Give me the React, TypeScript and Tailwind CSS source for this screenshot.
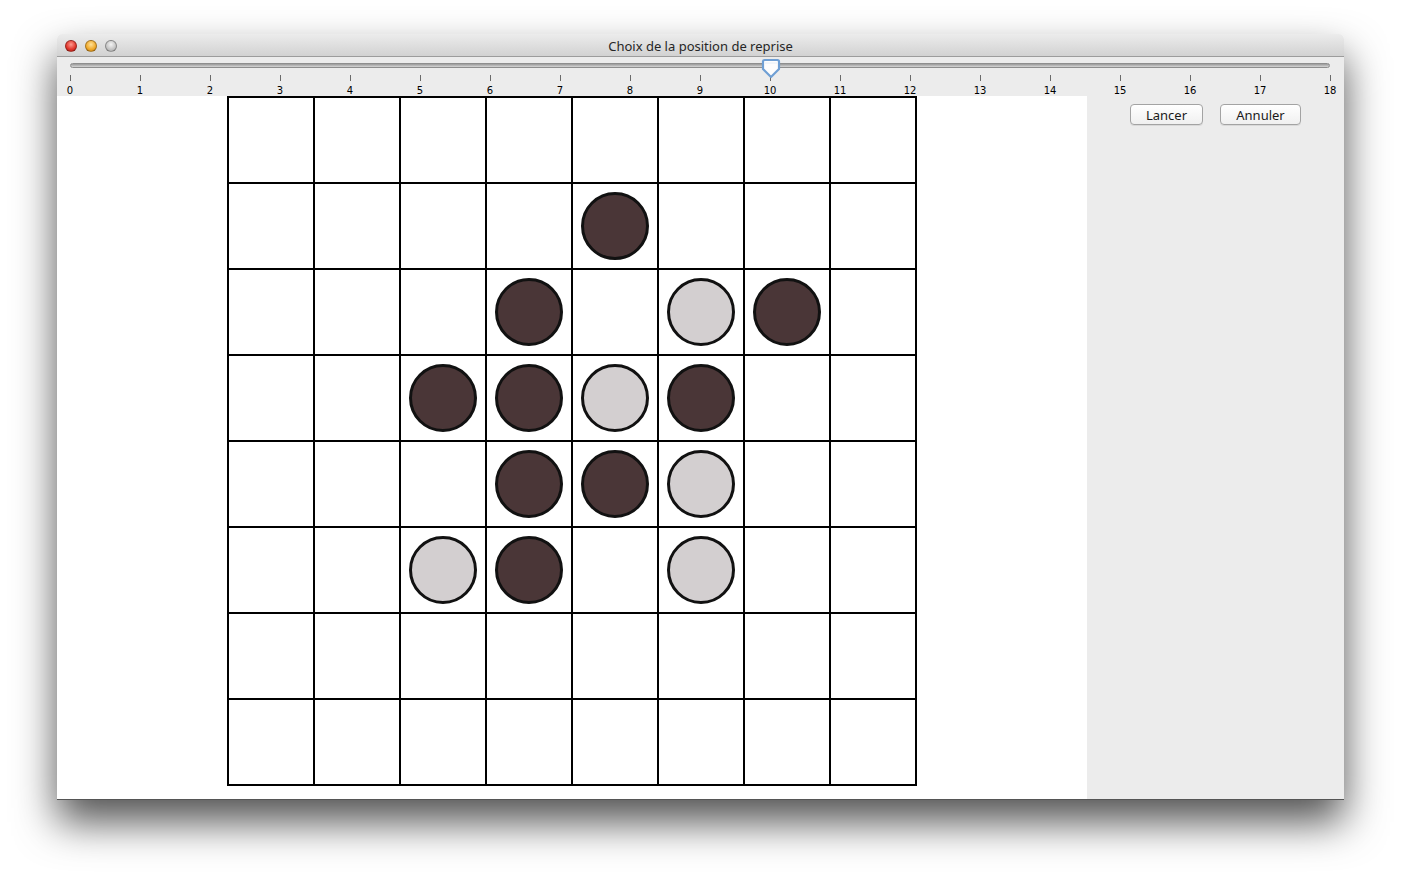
import React from 'react';

// 0 = empty, 1 = dark, 2 = light
const board: number[][] = [
  [0, 0, 0, 0, 0, 0, 0, 0],
  [0, 0, 0, 0, 1, 0, 0, 0],
  [0, 0, 0, 1, 0, 2, 1, 0],
  [0, 0, 1, 1, 2, 1, 0, 0],
  [0, 0, 0, 1, 1, 2, 0, 0],
  [0, 0, 2, 1, 0, 2, 0, 0],
  [0, 0, 0, 0, 0, 0, 0, 0],
  [0, 0, 0, 0, 0, 0, 0, 0],
];

const ticks = Array.from({ length: 19 }, (_, i) => i);

const Light: React.FC<{ color: string }> = ({ color }) => (
  <div className={`w-[12px] h-[12px] rounded-full border border-black/30 ${color}`} />
);

const App: React.FC = () => {
  return (
    <div className="w-[1401px] h-[879px] bg-white pl-[57px] pt-[34px] font-['Noto_Sans',sans-serif]">
      <div className="w-[1287px] h-[766px] flex flex-col rounded-t-[5px] border-b border-[#555] shadow-[0_22px_42px_rgba(0,0,0,0.68)] overflow-hidden">
        {/* title bar */}
        <div className="relative h-[23px] flex items-center justify-center bg-gradient-to-b from-[#ececec] to-[#d2d2d2] border-b border-[#9c9c9c]">
          <div className="absolute left-[8px] top-[6px] flex gap-[8px]">
            <Light color="bg-[radial-gradient(circle_at_50%_35%,#ff9a8f,#e0352b_60%,#b01e16)]" />
            <Light color="bg-[radial-gradient(circle_at_50%_35%,#ffe29a,#f0a92a_60%,#c07a10)]" />
            <Light color="bg-[radial-gradient(circle_at_50%_35%,#f4f4f4,#c4c4c4_60%,#a6a6a6)]" />
          </div>
          <span className="mt-[2px] text-[13px] leading-[16px] text-[#262626]">Choix de la position de reprise</span>
        </div>

        {/* slider */}
        <div className="relative h-[39px] bg-[#ececec] pl-[13px] pr-[14px]">
          <div className="mt-[6px] h-[5px] rounded-full border border-[#8e8e8e] bg-gradient-to-b from-[#9a9a9a] to-[#d6d6d6]" />
          <div className="mt-[7px] flex justify-between">
            {ticks.map((t) => (
              <div key={t} className="w-0 flex flex-col items-center">
                <div className="w-px h-[6px] bg-[#6a6a6a] shrink-0" />
                <span className="mt-[4px] text-[10px] leading-[12px] text-black font-['DejaVu_Sans',sans-serif] whitespace-nowrap">{t}</span>
              </div>
            ))}
          </div>
          <svg className="absolute left-[703px] top-[1px]" width="22" height="22" viewBox="0 0 22 22">
            <path d="M3 3.5 Q3 2 4.5 2 H17.5 Q19 2 19 3.5 V11 L11 19 L3 11 Z" fill="#fdfdfd" stroke="#6f9fd4" strokeWidth="2.2" strokeLinejoin="round" />
            <path d="M5 5 H17" stroke="#e6eef8" strokeWidth="1" />
          </svg>
        </div>

        {/* body */}
        <div className="flex flex-1">
          <div className="w-[1030px] bg-white pl-[170px]">
            <div className="w-[690px] grid grid-cols-8 gap-[2px] p-[2px] bg-black">
              {board.flatMap((row, r) =>
                row.map((v, c) => (
                  <div key={`${r}-${c}`} className="h-[84px] bg-white flex items-center justify-center">
                    {v === 1 && <div className="w-[68px] h-[68px] rounded-full border-[3px] border-[#111] bg-[#4a3637]" />}
                    {v === 2 && <div className="w-[68px] h-[68px] rounded-full border-[3px] border-[#111] bg-[#d3cfd0]" />}
                  </div>
                ))
              )}
            </div>
          </div>
          <div className="flex-1 bg-[#ececec] pl-[43px] pt-[8px]">
            <div className="flex gap-[17px]">
              <button className="w-[73px] h-[21px] rounded-[4px] border border-[#a3a3a3] bg-gradient-to-b from-white to-[#f0f0f0] text-[13px] leading-[16px] text-[#1a1a1a] shadow-[0_1px_0_rgba(0,0,0,0.08)]">Lancer</button>
              <button className="w-[81px] h-[21px] rounded-[4px] border border-[#a3a3a3] bg-gradient-to-b from-white to-[#f0f0f0] text-[13px] leading-[16px] text-[#1a1a1a] shadow-[0_1px_0_rgba(0,0,0,0.08)]">Annuler</button>
            </div>
          </div>
        </div>
      </div>
    </div>
  );
};

export default App;
